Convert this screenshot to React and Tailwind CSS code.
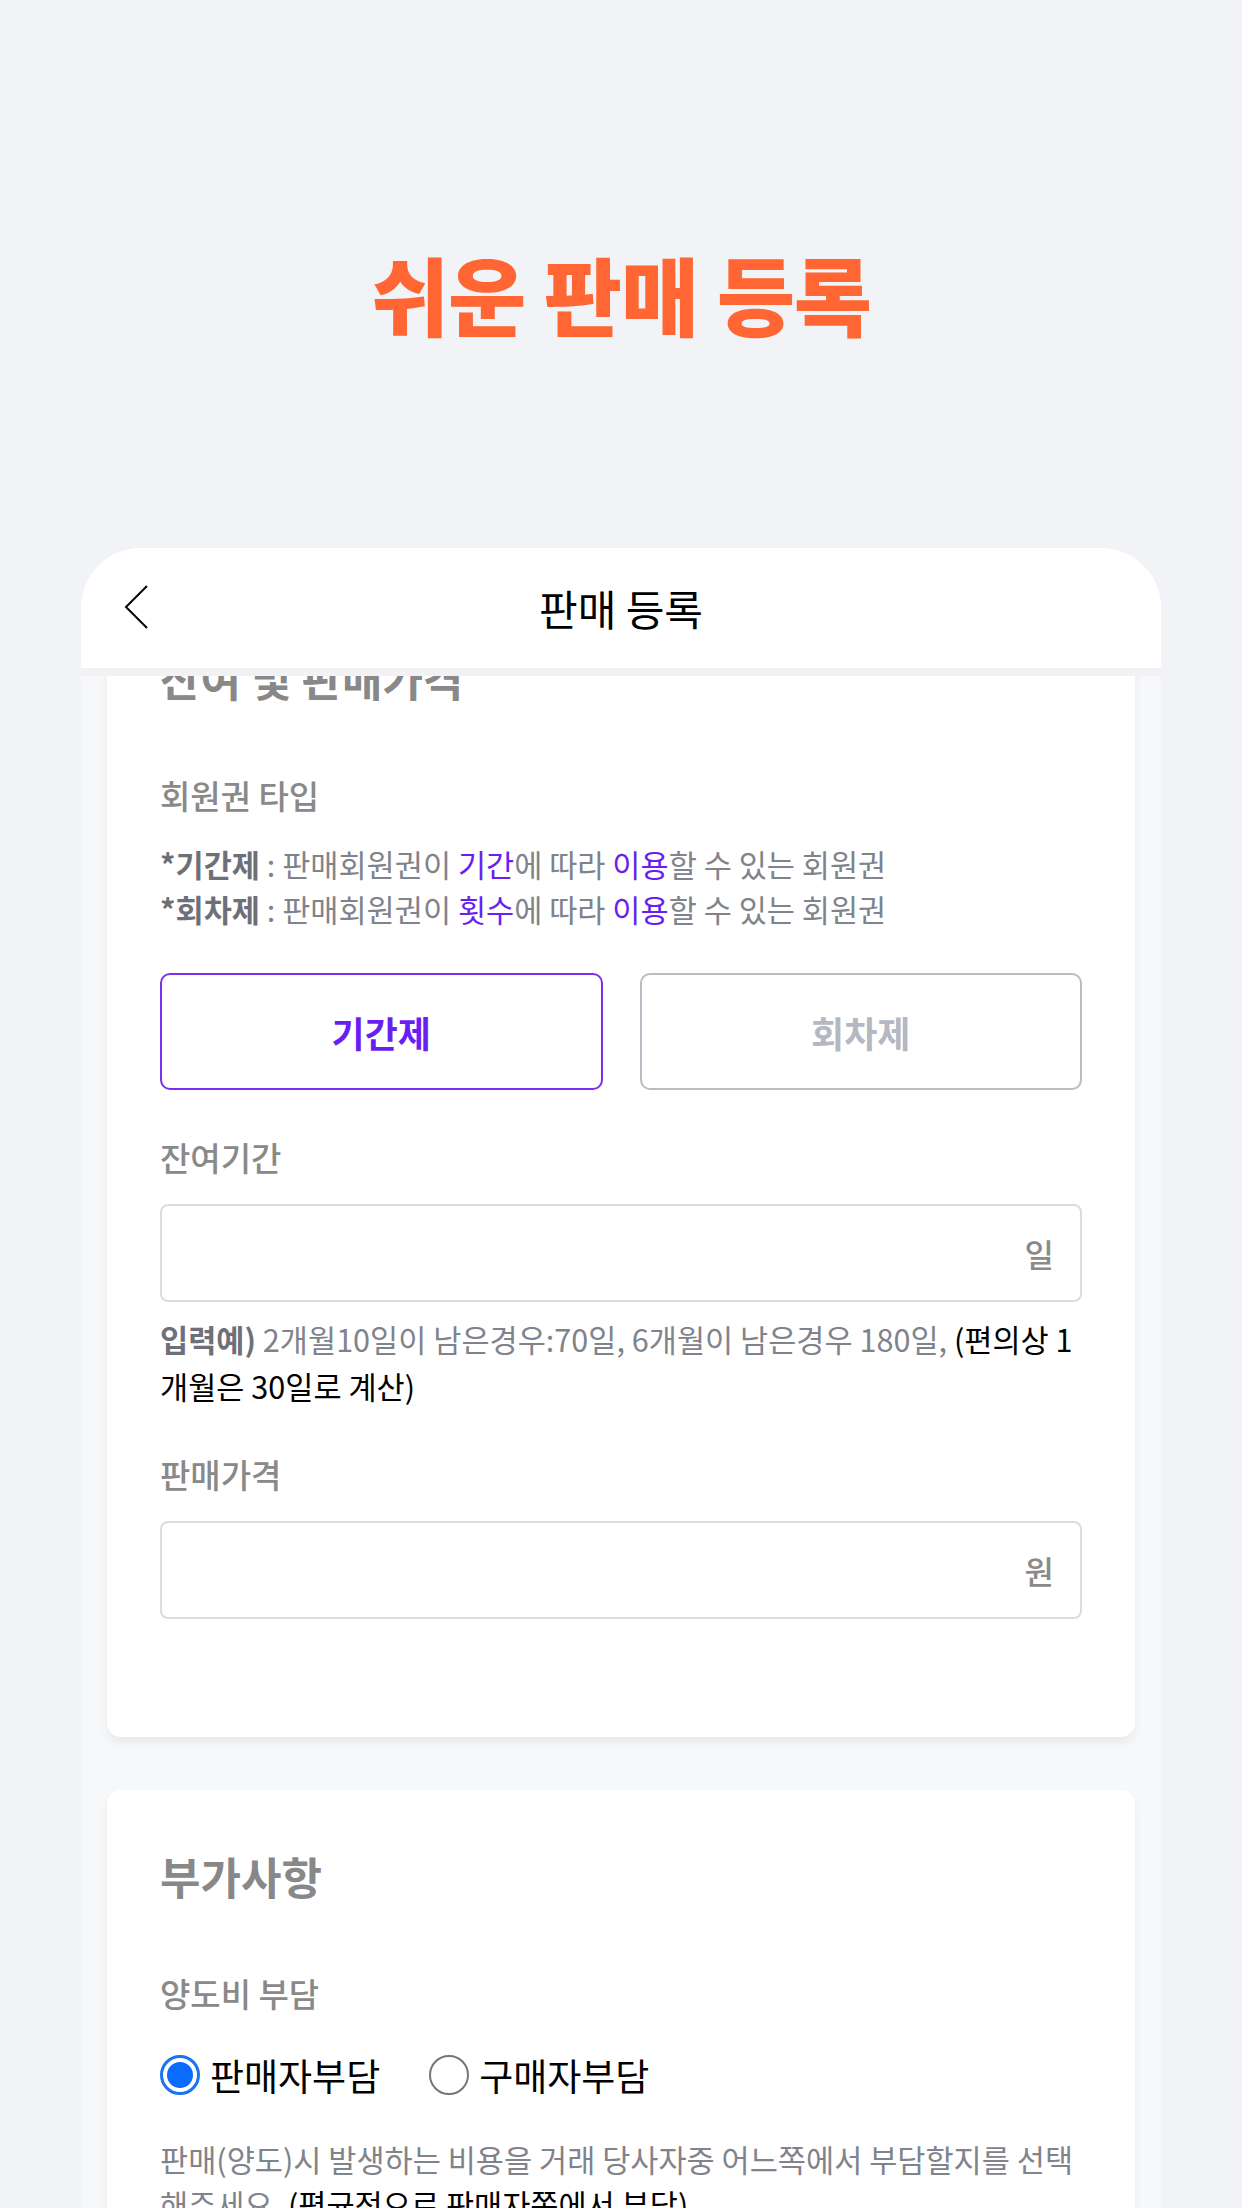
import React, { useState } from 'react';

const FONT = { fontFamily: '"Noto Sans CJK KR", "Noto Sans", sans-serif' };

const Radio = ({ checked, label, onClick }) => (
  <button type="button" onClick={onClick} className="flex items-center gap-[10px]">
    {checked ? (
      <span className="flex h-[40px] w-[40px] items-center justify-center rounded-full border-[3px] border-[#1a73f0] bg-white">
        <span className="h-[26px] w-[26px] rounded-full bg-[#0a6cff]" />
      </span>
    ) : (
      <span className="h-[40px] w-[40px] rounded-full border-2 border-[#767676] bg-white" />
    )}
    <span className="text-[37px] leading-[48px] text-black">{label}</span>
  </button>
);

const UnitInput = ({ unit }) => (
  <div className="flex h-[98px] items-center justify-end rounded-[8px] border-2 border-[#dcdcdc] bg-white pr-[26px]">
    <span className="text-[32px] font-medium leading-none text-[#8a8a8a]">{unit}</span>
  </div>
);

const App = () => {
  const [type, setType] = useState('period');
  const [payer, setPayer] = useState('seller');

  return (
    <div className="min-h-screen w-full bg-[#f2f3f7]" style={FONT}>
      {/* 상단 타이틀 */}
      <div className="flex h-[548px] justify-center pt-[250px]">
        <h1 className="text-[85px] font-black leading-none tracking-[-1px] text-[#ff6633]">
          쉬운 판매 등록
        </h1>
      </div>

      {/* 폰 화면 */}
      <div className="mx-[81px] h-[1660px] overflow-hidden rounded-t-[60px] bg-[#f7f8fa]">
        <div className="relative z-10 flex h-[128px] items-center justify-center border-b-8 border-[#f2f2f4] bg-white">
          <svg className="absolute left-[42px] top-[36px]" width="26" height="46" viewBox="0 0 26 46" fill="none">
            <path d="M24 2 L3 23 L24 44" stroke="#000" strokeWidth="2" />
          </svg>
          <span className="text-[42px] leading-none text-black">판매 등록</span>
        </div>

        <div className="px-[26px]">
          {/* 잔여 및 판매가격 */}
          <div className="-mt-[40px] rounded-[14px] bg-white px-[53px] pb-[118px] pt-[22px] shadow-[0_6px_10px_rgba(0,0,0,0.06)]">
            <div className="text-[44px] font-bold leading-[40px] text-[#888888]">잔여 및 판매가격</div>

            <div className="mt-[82px] text-[33px] font-medium leading-[30px] text-[#898989]">회원권 타입</div>
            <div className="mt-[32px] text-[30.6px] leading-[45px] text-[#80838b]">
              <p>
                <b className="font-bold text-[#6e7079]">*기간제</b> : 판매회원권이 <span className="text-[#6a1ff2]">기간</span>에 따라{' '}
                <span className="text-[#6a1ff2]">이용</span>할 수 있는 회원권
              </p>
              <p>
                <b className="font-bold text-[#6e7079]">*회차제</b> : 판매회원권이 <span className="text-[#6a1ff2]">횟수</span>에 따라{' '}
                <span className="text-[#6a1ff2]">이용</span>할 수 있는 회원권
              </p>
            </div>

            <div className="mt-[41px] grid grid-cols-2 gap-[37px]">
              <button
                type="button"
                onClick={() => setType('period')}
                className={`h-[117px] rounded-[10px] border-2 bg-white text-[36px] font-bold ${
                  type === 'period' ? 'border-[#7a30f0] text-[#6a1ff2]' : 'border-[#b9bcc5] text-[#b5b8c1]'
                }`}
              >
                기간제
              </button>
              <button
                type="button"
                onClick={() => setType('count')}
                className={`h-[117px] rounded-[10px] border-2 bg-white text-[36px] font-bold ${
                  type === 'count' ? 'border-[#7a30f0] text-[#6a1ff2]' : 'border-[#b9bcc5] text-[#b5b8c1]'
                }`}
              >
                회차제
              </button>
            </div>

            <div className="mt-[52px] text-[33px] font-medium leading-[30px] text-[#898989]">잔여기간</div>
            <div className="mt-[32px]">
              <UnitInput unit="일" />
            </div>
            <p className="mt-[14px] text-[30.6px] leading-[47px] text-[#80838b]">
              <b className="font-bold text-[#6e7079]">입력예)</b> 2개월10일이 남은경우:70일, 6개월이 남은경우 180일,{' '}
              <span className="text-black">(편의상 1 개월은 30일로 계산)</span>
            </p>

            <div className="mt-[49px] text-[33px] font-medium leading-[30px] text-[#898989]">판매가격</div>
            <div className="mt-[32px]">
              <UnitInput unit="원" />
            </div>
          </div>

          {/* 부가사항 */}
          <div className="mt-[53px] rounded-[14px] bg-white px-[53px] pb-[60px] pt-[66px] shadow-[0_6px_10px_rgba(0,0,0,0.06)]">
            <div className="text-[44px] font-bold leading-[40px] text-[#888888]">부가사항</div>
            <div className="mt-[82px] text-[33px] font-medium leading-[30px] text-[#898989]">양도비 부담</div>
            <div className="mt-[43px] flex items-center gap-[49px]">
              <Radio checked={payer === 'seller'} label="판매자부담" onClick={() => setPayer('seller')} />
              <Radio checked={payer === 'buyer'} label="구매자부담" onClick={() => setPayer('buyer')} />
            </div>
            <p className="mt-[38px] text-[30.6px] leading-[45px] text-[#80838b]">
              판매(양도)시 발생하는 비용을 거래 당사자중 어느쪽에서 부담할지를 선택해주세요.{' '}
              <span className="text-black">(평균적으로 판매자쪽에서 부담)</span>
            </p>
          </div>
        </div>
      </div>
    </div>
  );
};

export default App;
